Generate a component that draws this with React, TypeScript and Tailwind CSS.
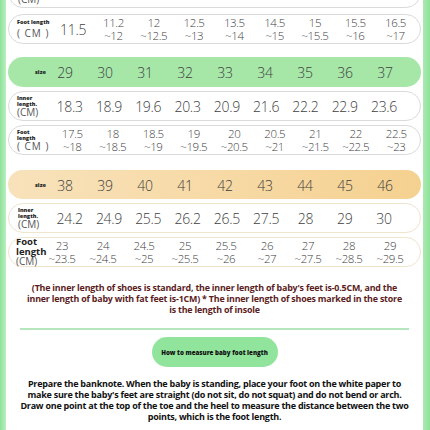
import React from 'react';

type Cell = string[];

const g1Foot: Cell[] = [
  ['11.5'],
  ['11.2', '~12'],
  ['12', '~12.5'],
  ['12.5', '~13'],
  ['13.5', '~14'],
  ['14.5', '~15'],
  ['15', '~15.5'],
  ['15.5', '~16'],
  ['16.5', '~17'],
];
const g2Size: Cell[] = ['29', '30', '31', '32', '33', '34', '35', '36', '37'].map((v) => [v]);
const g2Inner: Cell[] = ['18.3', '18.9', '19.6', '20.3', '20.9', '21.6', '22.2', '22.9', '23.6'].map((v) => [v]);
const g2Foot: Cell[] = [
  ['17.5', '~18'],
  ['18', '~18.5'],
  ['18.5', '~19'],
  ['19', '~19.5'],
  ['20', '~20.5'],
  ['20.5', '~21'],
  ['21', '~21.5'],
  ['22', '~22.5'],
  ['22.5', '~23'],
];
const g3Size: Cell[] = ['38', '39', '40', '41', '42', '43', '44', '45', '46'].map((v) => [v]);
const g3Inner: Cell[] = ['24.2', '24.9', '25.5', '26.2', '26.5', '27.5', '28', '29', '30'].map((v) => [v]);
const g3Foot: Cell[] = [
  ['23', '~23.5'],
  ['24', '~24.5'],
  ['24.5', '~25'],
  ['25', '~25.5'],
  ['25.5', '~26'],
  ['26', '~27'],
  ['27', '~27.5'],
  ['28', '~28.5'],
  ['29', '~29.5'],
];

const Values = ({ cells, col }: { cells: Cell[]; col: string }) => (
  <>
    {cells.map((c, i) => (
      <div key={i} className={`${col} shrink-0 text-center text-[#3f3f3f] font-light`}>
        {c.length === 1 ? (
          <span className="text-[14px] tracking-[-0.3px]">{c[0]}</span>
        ) : (
          <div className="text-[11.5px] leading-[13px] tracking-[-0.4px]">
            {c[0]}
            <br />
            {c[1]}
          </div>
        )}
      </div>
    ))}
  </>
);

const TinyLabel = ({ lines }: { lines: string[] }) => (
  <div className="text-[5.5px] leading-[6px] font-extrabold text-[#222]">
    {lines.map((l) => (
      <div key={l}>{l}</div>
    ))}
  </div>
);

const CM = ({ spaced }: { spaced?: boolean }) => (
  <div className={`text-[10px] leading-[11px] text-[#555] ${spaced ? 'tracking-[1px]' : ''}`}>
    {spaced ? '( CM )' : '(CM)'}
  </div>
);

const App: React.FC = () => {
  return (
    <div className="w-[430px] h-[430px] overflow-hidden bg-white flex font-['Open_Sans','Noto_Sans',sans-serif]">
      <div className="w-[6px] shrink-0 bg-gradient-to-r from-[#8fe19a] to-[#b9eec0]" />

      <div className="flex-1 flex flex-col">
        {/* rows */}
        <div className="mx-[2px] flex flex-col">
          <div className="-mt-[22px] h-[30px] flex items-end pb-[2px] rounded-full border border-[#dadada]">
            <div className="w-[41px] pl-[9px] shrink-0">
              <CM />
            </div>
          </div>

          <div className="mt-[6px] h-[30px] flex items-center rounded-full border border-[#dadada]">
            <div className="w-[44px] pl-[8px] shrink-0 whitespace-nowrap">
              <TinyLabel lines={['Foot length']} />
              <div className="mt-[3px]">
                <CM spaced />
              </div>
            </div>
            <Values cells={g1Foot} col="w-[40.3px]" />
          </div>

          <div className="mt-[13px] h-[30px] flex items-center rounded-full bg-[#a6e7a8]">
            <div className="w-[37px] pl-[27px] shrink-0">
              <TinyLabel lines={['size']} />
            </div>
            <Values cells={g2Size} col="w-[40px]" />
          </div>

          <div className="mt-[4px] h-[30px] flex items-center rounded-full border border-[#dadada]">
            <div className="w-[41px] pl-[8px] shrink-0">
              <TinyLabel lines={['Inner', 'length.']} />
              <CM />
            </div>
            <Values cells={g2Inner} col="w-[39.3px]" />
          </div>

          <div className="mt-[4px] h-[30px] flex items-center rounded-full border border-[#dadada]">
            <div className="w-[43px] pl-[8px] shrink-0">
              <TinyLabel lines={['Foot', 'length']} />
              <CM spaced />
            </div>
            <Values cells={g2Foot} col="w-[40.5px]" />
          </div>

          <div className="mt-[15px] h-[29px] flex items-center rounded-full bg-gradient-to-r from-[#f8e2bb] to-[#f5d190]">
            <div className="w-[37px] pl-[27px] shrink-0">
              <TinyLabel lines={['size']} />
            </div>
            <Values cells={g3Size} col="w-[40px]" />
          </div>

          <div className="mt-[4px] h-[30px] flex items-center rounded-full border border-[#efe4cc]">
            <div className="w-[41px] pl-[9px] shrink-0">
              <TinyLabel lines={['Inner', 'length.']} />
              <CM />
            </div>
            <Values cells={g3Inner} col="w-[39.3px]" />
          </div>

          <div className="mt-[4px] h-[30px] flex items-center rounded-full border border-[#efe4cc]">
            <div className="w-[32.5px] pl-[7px] shrink-0 whitespace-nowrap">
              <div className="text-[9.5px] leading-[9.5px] font-bold text-[#222]">
                Foot
                <br />
                length
              </div>
              <CM />
            </div>
            <Values cells={g3Foot} col="w-[41px]" />
          </div>
        </div>

        {/* note */}
        <div className="mt-[16px] text-center text-[8.9px] leading-[10.8px] font-bold text-[#5b1c1c] tracking-[-0.2px] whitespace-nowrap">
          <div>(The inner length of shoes is standard, the inner length of baby's feet is-0.5CM, and the</div>
          <div>inner length of baby with fat feet is-1CM) * The inner length of shoes marked in the store</div>
          <div>is the length of insole</div>
        </div>

        <div className="mt-[13px] mx-[14px] h-[2px] bg-[#b5e6bd]" />

        <div className="mt-[7px] flex justify-center">
          <div className="w-[126px] h-[30px] rounded-full bg-[#90e49b] flex items-center justify-center text-[6.2px] font-extrabold text-[#111] whitespace-nowrap">
            How to measure baby foot length
          </div>
        </div>

        <div className="mt-[12px] text-center text-[9px] leading-[10.8px] font-bold text-[#111] tracking-[-0.25px] whitespace-nowrap">
          <div>Prepare the banknote. When the baby is standing, place your foot on the white paper to</div>
          <div>make sure the baby's feet are straight (do not sit, do not squat) and do not bend or arch.</div>
          <div>Draw one point at the top of the toe and the heel to measure the distance between the two</div>
          <div>points, which is the foot length.</div>
        </div>
      </div>

      <div className="w-[7px] shrink-0 bg-gradient-to-l from-[#8fe19a] to-[#a9eab1]" />
    </div>
  );
};

export default App;
